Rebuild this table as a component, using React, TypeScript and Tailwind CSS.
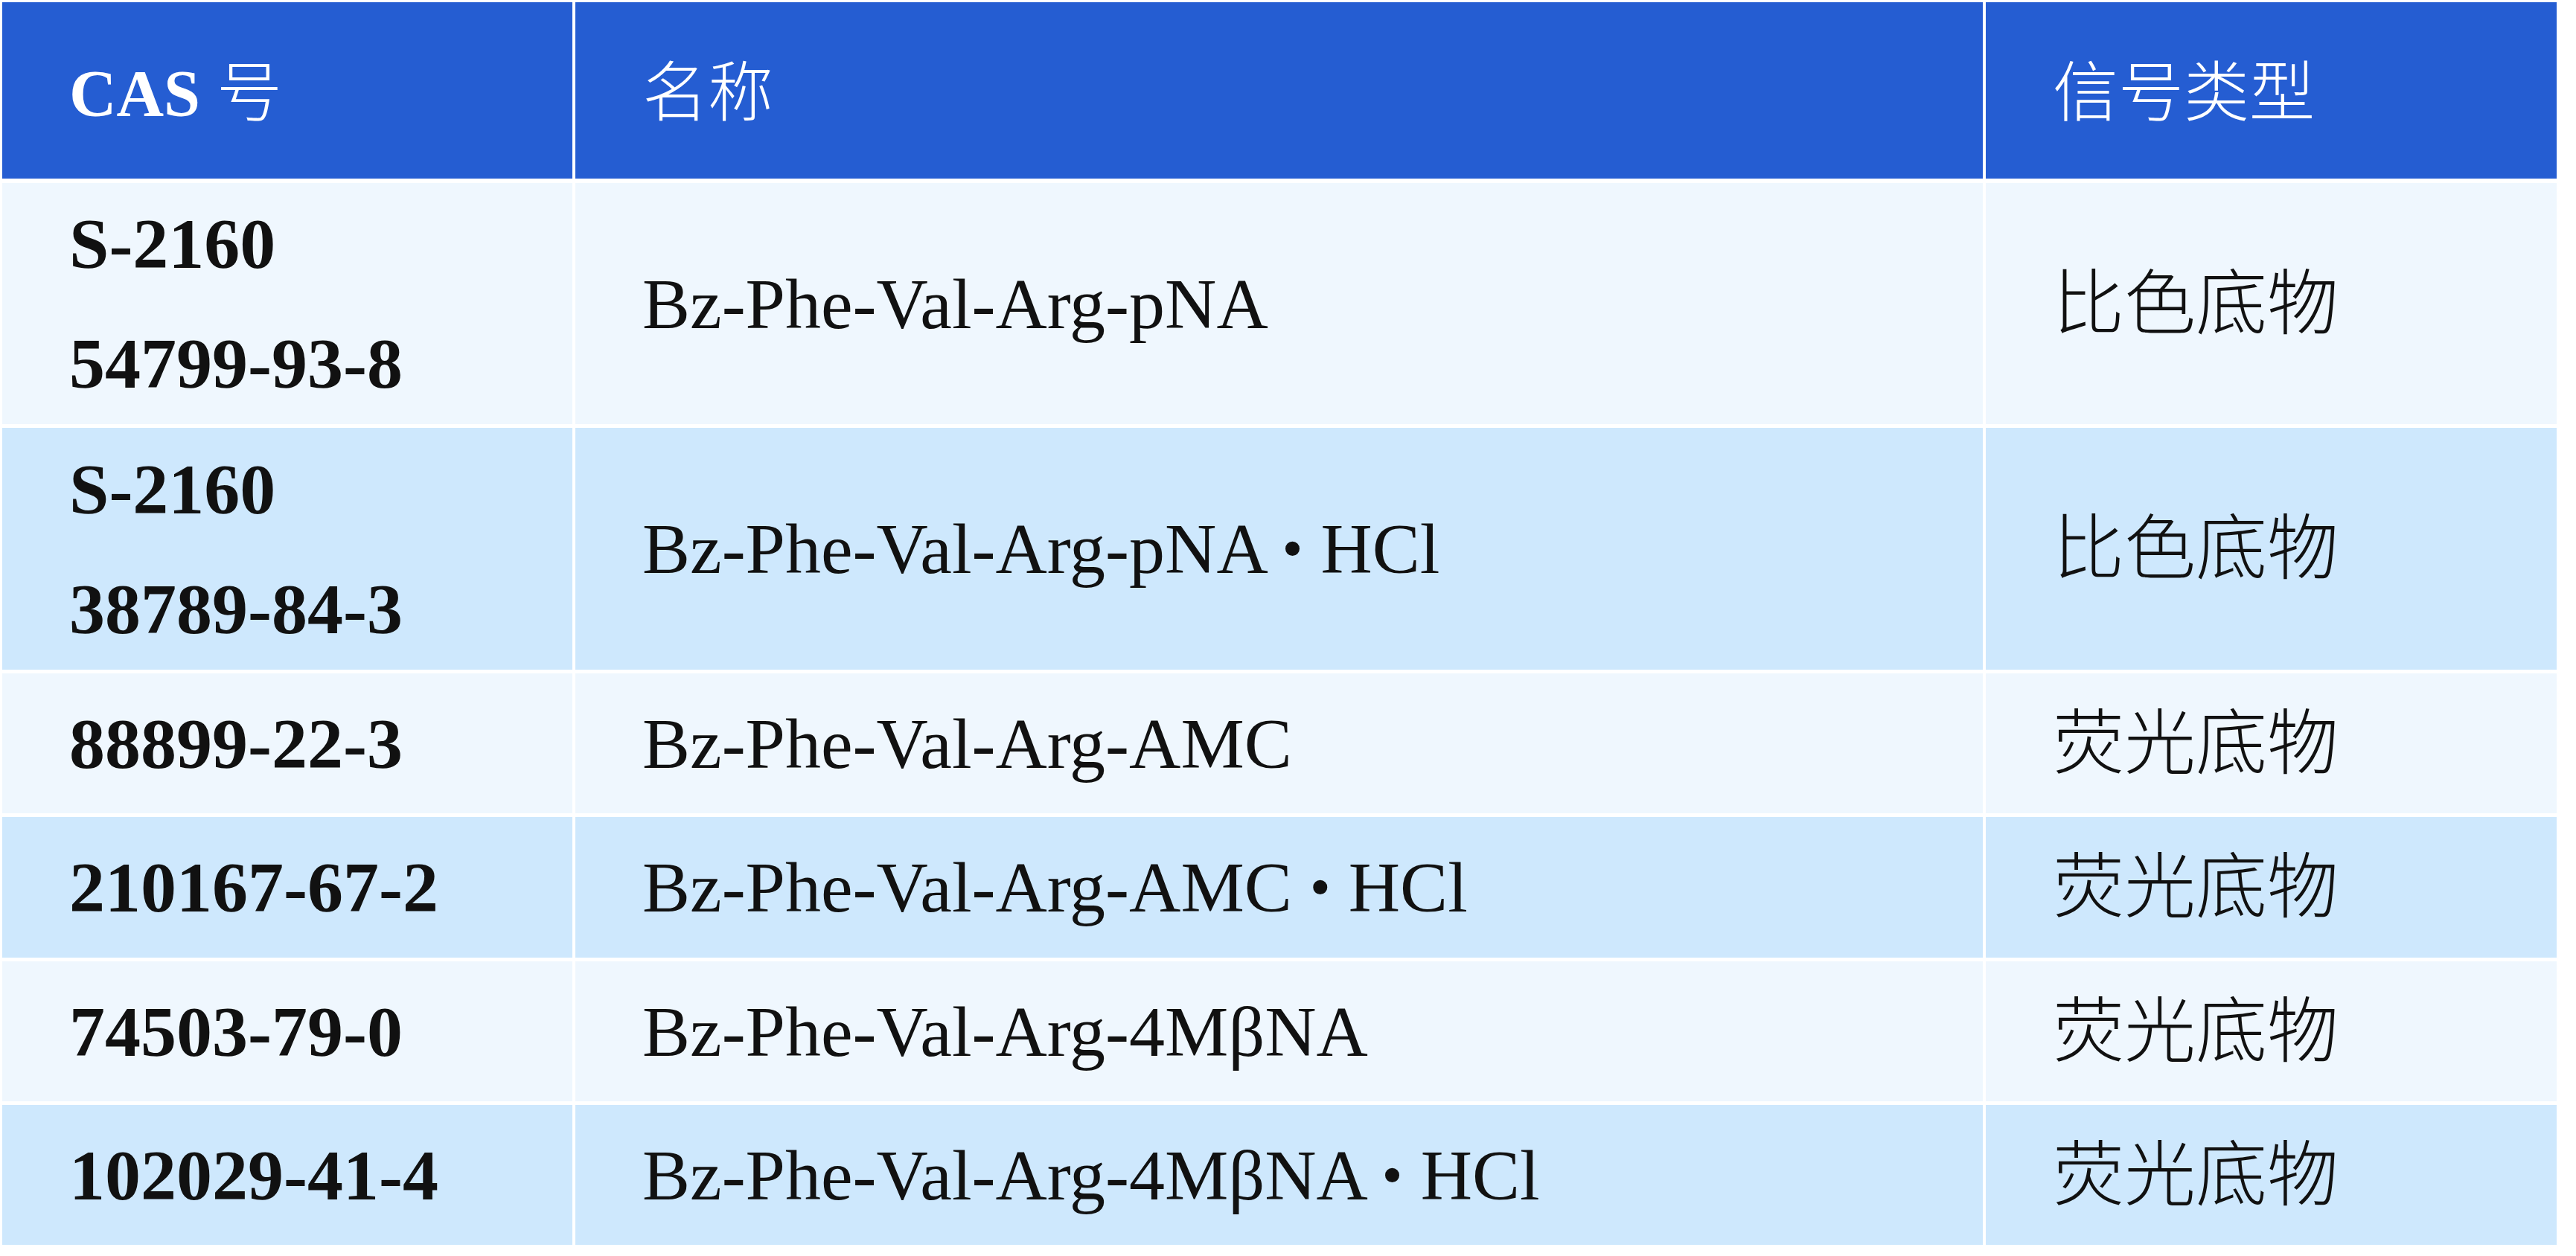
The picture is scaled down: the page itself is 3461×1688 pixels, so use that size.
const rows = [
  { cas: ["S-2160", "54799-93-8"], name: "Bz-Phe-Val-Arg-pNA", salt: false, type: "比色底物", height: "h-[324px]", bg: "bg-[#eff7fe]" },
  { cas: ["S-2160", "38789-84-3"], name: "Bz-Phe-Val-Arg-pNA", salt: true, type: "比色底物", height: "h-[325px]", bg: "bg-[#cee8fd]" },
  { cas: ["88899-22-3"], name: "Bz-Phe-Val-Arg-AMC", salt: false, type: "荧光底物", height: "h-[188px]", bg: "bg-[#eff7fe]" },
  { cas: ["210167-67-2"], name: "Bz-Phe-Val-Arg-AMC", salt: true, type: "荧光底物", height: "h-[189px]", bg: "bg-[#cee8fd]" },
  { cas: ["74503-79-0"], name: "Bz-Phe-Val-Arg-4MβNA", salt: false, type: "荧光底物", height: "h-[188px]", bg: "bg-[#eff7fe]" },
  { cas: ["102029-41-4"], name: "Bz-Phe-Val-Arg-4MβNA", salt: true, type: "荧光底物", height: "h-[188px]", bg: "bg-[#cee8fd]" },
]

export default function App() {
  return (
    <div className="min-h-screen bg-white pl-[3px] pt-[3px] font-['Liberation_Serif','Noto_Sans_CJK_SC',serif] text-[#111111]">
      <div className="w-[3432px] flex flex-col gap-[6px]">
        {/* Header */}
        <div className="grid grid-cols-[766px_1891px_767px] gap-x-[4px] h-[237px] text-white text-[88px] leading-[100px]">
          <div className="flex items-center pl-[90px] pt-[8px] bg-[#255dd2]">
            <span className="font-bold">CAS</span>
            <span className="whitespace-pre font-light"> 号</span>
          </div>
          <div className="flex items-center pl-[90px] pt-[8px] bg-[#255dd2] font-light">名称</div>
          <div className="flex items-center pl-[90px] pt-[8px] bg-[#255dd2] font-light">信号类型</div>
        </div>

        {/* Body */}
        <div className="flex flex-col gap-[5px]">
          {rows.map((row, i) => (
            <div key={i} className={`grid grid-cols-[766px_1891px_767px] gap-x-[4px] ${row.height}`}>
              <div className={`flex flex-col justify-center pl-[90px] ${row.bg}`}>
                {row.cas.map((c) => (
                  <div key={c} className="text-[96px] leading-[161px] font-bold">
                    {c}
                  </div>
                ))}
              </div>
              <div className={`flex items-center pl-[90px] text-[96px] leading-[161px] whitespace-pre ${row.bg}`}>
                {row.name}
                {row.salt && (
                  <>
                    {" "}
                    <span className="text-[80px]">•</span>
                    {" HCl"}
                  </>
                )}
              </div>
              <div className={`flex items-center pl-[90px] text-[96px] leading-[161px] font-light ${row.bg}`}>
                {row.type}
              </div>
            </div>
          ))}
        </div>
      </div>
    </div>
  )
}
